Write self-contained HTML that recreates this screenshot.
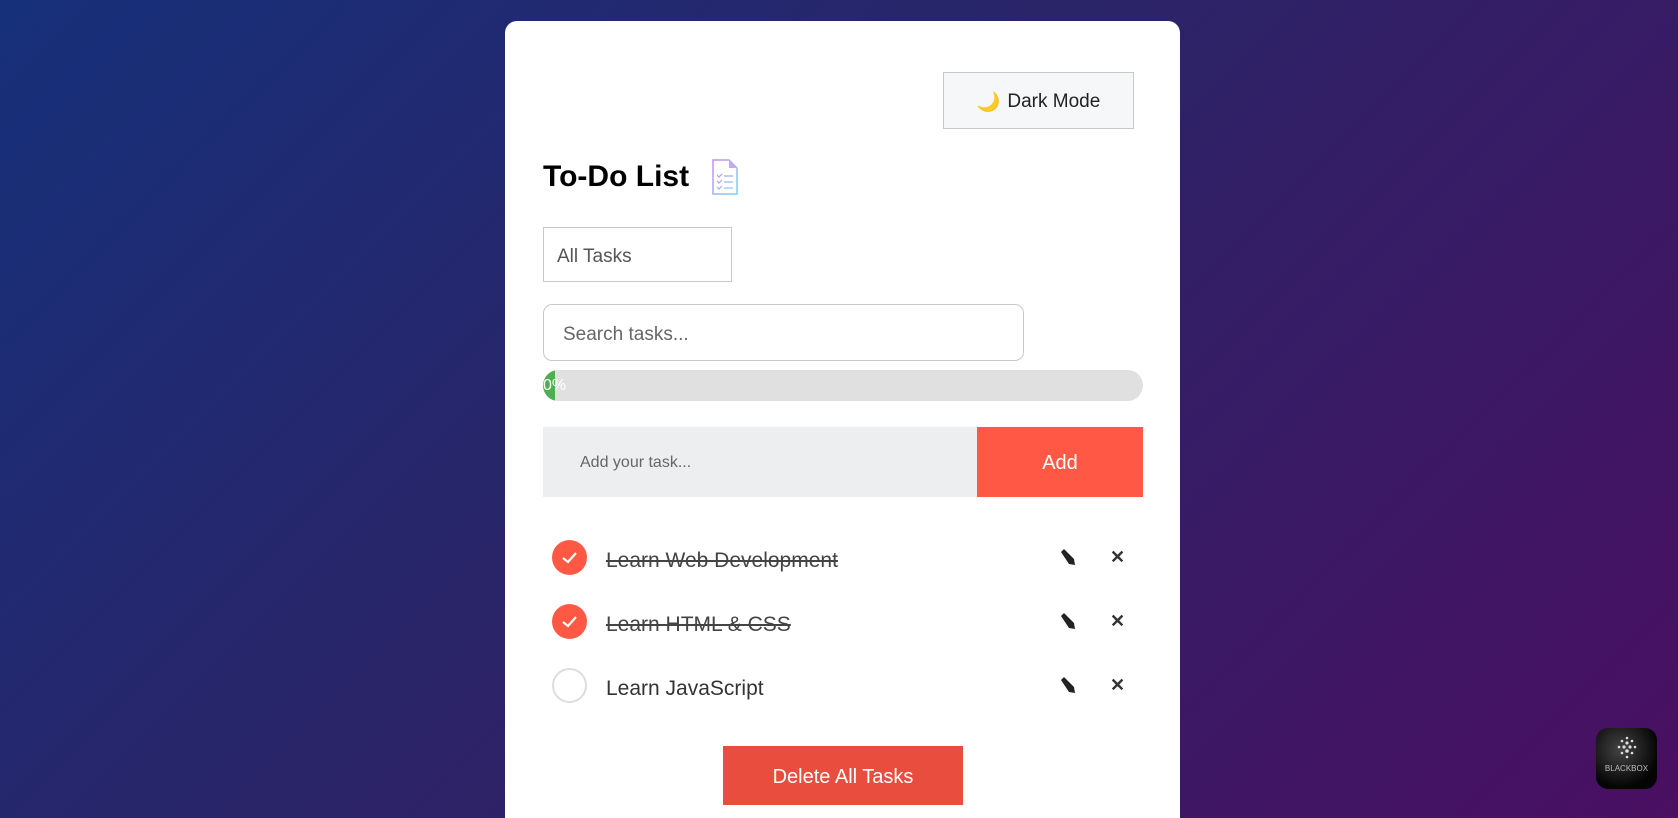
<!DOCTYPE html>
<html><head><meta charset="utf-8"><style>
*{box-sizing:border-box;margin:0;padding:0}
html,body{width:1678px;height:818px;overflow:hidden}
body{background:linear-gradient(135deg,#16307a 0%,#2b2468 45%,#4a0f62 100%);font-family:"Liberation Sans",sans-serif;position:relative}
.card{position:absolute;left:505px;top:21px;width:675px;height:820px;background:#fff;border-radius:12px}
.abs{position:absolute}
.dm{left:438px;top:51px;width:191px;height:57px;background:#f6f7f9;border:1px solid #c9c9c9;font-size:19px;color:#222;display:flex;align-items:center;justify-content:center;gap:7px;padding-top:3px}
.sel{left:38px;top:206px;width:189px;height:55px;border:1px solid #c9c9c9;font-size:19px;color:#555;padding:18px 13px}
.srch{left:38px;top:283px;width:481px;height:57px;border:1px solid #c9c9c9;border-radius:9px;font-size:19px;color:#666;padding:19px 19px}
.prog{left:38px;top:349px;width:600px;height:31px;border-radius:16px;background:#e0e0e0;overflow:hidden}
.prog i{position:absolute;left:0;top:0;width:12px;height:31px;background:#4caf50}
.prog span{position:absolute;left:0;top:7px;font-size:16px;color:#fff}
.addrow{left:38px;top:406px;width:600px;height:70px;background:#edeef0}
.addrow span{position:absolute;left:37px;top:27px;font-size:16px;color:#666}
.addbtn{position:absolute;right:0;top:0;width:166px;height:70px;background:#ff5945;color:#fff;font-size:20px;display:flex;align-items:center;justify-content:center;padding-top:3px}
.task{left:47px;width:580px;height:40px}
.cb{position:absolute;left:0;top:1px;width:35px;height:35px;border-radius:50%;background:#ff5945}
.cb.off{background:#fff;border:2px solid #ddd}
.tt{position:absolute;left:54px;top:10px;font-size:21px;color:#333}
.done{text-decoration:line-through;color:#444}
.ed{position:absolute;left:506px;top:8px}
.x{position:absolute;left:558px;top:8px;font-size:18px;font-weight:bold;color:#333}
.del{left:218px;top:725px;width:240px;height:59px;background:#e84d3e;color:#fff;font-size:20px;display:flex;align-items:center;justify-content:center;padding-top:3px}
.bb{position:absolute;left:1596px;top:728px;width:61px;height:61px;border-radius:12px;background:radial-gradient(circle at 40% 35%,#444,#050505 70%);color:#bbb;font-size:8px;text-align:center}
</style></head><body>
<div class="card">
<div class="abs dm"><span style="color:#f0a030">🌙</span>Dark Mode</div>
<div class="abs" style="left:38px;top:139px;font-size:30px;font-weight:bold;color:#000">To-Do List</div>
<svg class="abs" style="left:207px;top:138px" width="26" height="36" viewBox="0 0 26 36"><defs><linearGradient id="g" x1="0" y1="0" x2="1" y2="1"><stop offset="0" stop-color="#c88ce8"/><stop offset="1" stop-color="#7ad4f5"/></linearGradient></defs><path d="M1 1H17L25 9V35H1Z" fill="#fff" stroke="url(#g)" stroke-width="1.5"/><path d="M17 1V9H25" fill="#c8a8ee"/><path d="M5 16l2 2 3-3M5 22l2 2 3-3M5 28l2 2 3-3M12 17h9M12 23h9M12 29h9" stroke="url(#g)" stroke-width="1.2" fill="none"/></svg>
<div class="abs sel">All Tasks</div>
<div class="abs srch">Search tasks...</div>
<div class="abs prog"><i></i><span>0%</span></div>
<div class="abs addrow"><span>Add your task...</span><div class="addbtn">Add</div></div>
<div class="abs task" style="top:518px"><div class="cb"><svg width="35" height="35"><path d="M11 18l5 4 8-9" stroke="#fff" stroke-width="2.2" fill="none"/></svg></div><div class="tt done">Learn Web Development</div><svg class="ed" width="20" height="20" viewBox="0 0 20 20"><path d="M3 5l3-3 10 10 1 6-6-1z" fill="#222"/></svg><div class="x">✕</div></div>
<div class="abs task" style="top:582px"><div class="cb"><svg width="35" height="35"><path d="M11 18l5 4 8-9" stroke="#fff" stroke-width="2.2" fill="none"/></svg></div><div class="tt done">Learn HTML &amp; CSS</div><svg class="ed" width="20" height="20" viewBox="0 0 20 20"><path d="M3 5l3-3 10 10 1 6-6-1z" fill="#222"/></svg><div class="x">✕</div></div>
<div class="abs task" style="top:646px"><div class="cb off"></div><div class="tt">Learn JavaScript</div><svg class="ed" width="20" height="20" viewBox="0 0 20 20"><path d="M3 5l3-3 10 10 1 6-6-1z" fill="#222"/></svg><div class="x">✕</div></div>
<div class="abs del">Delete All Tasks</div>
</div>
<div class="bb"><svg width="30" height="30" style="margin-top:6px" viewBox="0 0 30 30" fill="#ddd"><circle cx="15" cy="4" r="1.3"/><circle cx="10" cy="7" r="1.3"/><circle cx="20" cy="7" r="1.3"/><circle cx="15" cy="9" r="1.6"/><circle cx="7" cy="13" r="1.3"/><circle cx="12" cy="13" r="1.6"/><circle cx="18" cy="13" r="1.6"/><circle cx="23" cy="13" r="1.3"/><circle cx="15" cy="17" r="1.8"/><circle cx="10" cy="19" r="1.3"/><circle cx="20" cy="19" r="1.3"/><circle cx="15" cy="23" r="1.3"/></svg><div style="margin-top:-2px">BLACKBOX</div></div>
</body></html>
